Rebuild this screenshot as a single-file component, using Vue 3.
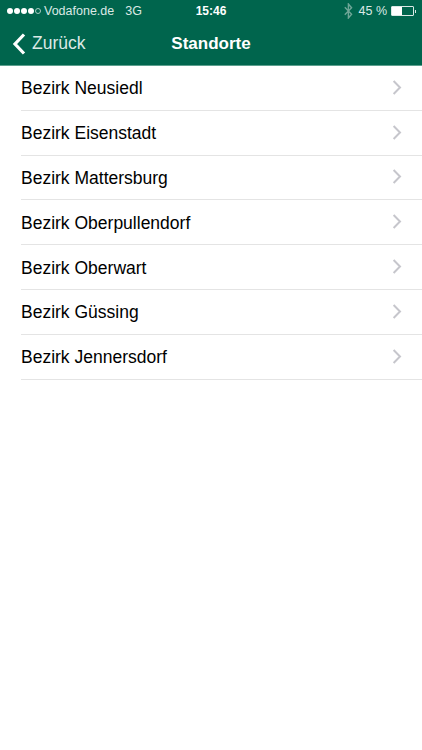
<script setup>
const rows = ['Bezirk Neusiedl','Bezirk Eisenstadt','Bezirk Mattersburg','Bezirk Oberpullendorf','Bezirk Oberwart','Bezirk Güssing','Bezirk Jennersdorf']
</script>

<template>
  <div class="page">
    <header class="header">
      <div class="status">
        <div class="status-left">
          <span class="signal">
            <i class="dot"></i><i class="dot"></i><i class="dot"></i><i class="dot"></i><i class="dot empty"></i>
          </span>
          <span class="carrier">Vodafone.de</span>
          <span class="net">3G</span>
        </div>
        <div class="time">15:46</div>
        <div class="status-right">
          <svg class="bt" width="9" height="16" viewBox="0 0 9 16" fill="none" stroke="#6ea697" stroke-width="1.4">
            <path d="M0.8 4.2 L7.6 11.2 L4.4 15 V1 L7.6 4.8 L0.8 11.8" />
          </svg>
          <span class="pct">45 %</span>
          <span class="battery"><span class="fill"></span></span>
          <span class="nub"></span>
        </div>
      </div>
      <div class="nav">
        <div class="back">
          <svg width="14" height="22" viewBox="0 0 14 22" fill="none" stroke="#fff" stroke-width="3.2">
            <path d="M12 1.5 L3 11 L12 20.5" />
          </svg>
          <span>Zurück</span>
        </div>
        <div class="title">Standorte</div>
      </div>
    </header>
    <ul class="list">
      <li v-for="r in rows" :key="r" class="row">
        <span class="label">{{ r }}</span>
        <svg class="chev" width="10" height="16" viewBox="0 0 10 16" fill="none" stroke="#c6c6cc" stroke-width="2">
          <path d="M1.6 1 L8 7.5 L1.6 14" />
        </svg>
      </li>
    </ul>
  </div>
</template>

<style scoped>
.page { width: 422px; height: 750px; background: #fff; font-family: "Liberation Sans", Arial, sans-serif; overflow: hidden; }
.header { height: 65px; background: #00654d; border-bottom: 1px solid #5c9f8e; color: #fff; }
.status { position: relative; height: 22px; display: flex; align-items: center; justify-content: space-between; padding: 0 6px 0 7px; font-size: 12.5px; color: #dbe9e5; }
.status-left { display: flex; align-items: center; }
.signal { display: flex; gap: 1px; margin-right: 3px; }
.dot { width: 6px; height: 6px; border-radius: 50%; background: #fff; box-sizing: border-box; }
.dot.empty { background: transparent; border: 1px solid #a9cbc2; }
.net { margin-left: 11px; }
.time { position: absolute; left: 0; right: 0; text-align: center; font-weight: 700; color: #fff; font-size: 12px; }
.status-right { display: flex; align-items: center; }
.bt { margin-right: 6px; }
.pct { margin-right: 4px; }
.battery { width: 23px; height: 10px; border: 1px solid #dbe9e5; display: block; box-sizing: border-box; border-radius: 1px; }
.fill { display: block; width: 10px; height: 100%; background: #fff; }
.nub { width: 1px; height: 3px; background: #dbe9e5; margin-left: 1px; }
.nav { position: relative; height: 43px; display: flex; align-items: center; }
.back { display: flex; align-items: center; gap: 6px; padding-left: 12px; font-size: 17.5px; color: #dbe9e5; }
.title { position: absolute; left: 0; right: 0; text-align: center; font-size: 17px; font-weight: 700; }
.list { list-style: none; margin: 0; padding: 0 0 0 21px; }
.row { height: 44.8px; box-sizing: border-box; display: flex; align-items: center; justify-content: space-between; padding: 2px 20px 0 0; border-bottom: 1px solid #e4e4e4; }
.label { font-size: 17.5px; color: #000; }
.chev { display: block; margin-top: -2px; }
</style>
